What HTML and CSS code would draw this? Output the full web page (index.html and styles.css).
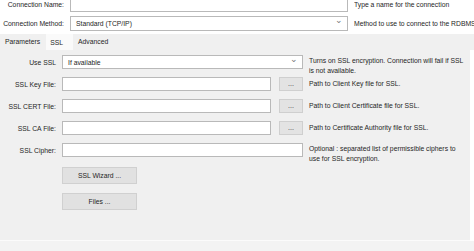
FILE: index.html
```html
<!DOCTYPE html>
<html>
<head>
    <title>Connection SSL</title>
    <link rel="stylesheet" href="styles.css">
</head>
<body>
    <div class="conn-header">
        <div class="conn-row row-name">
            <label>Connection Name:</label>
            <div class="text-input"></div>
            <span class="hint">Type a name for the connection</span>
        </div>
        <div class="conn-row">
            <label>Connection Method:</label>
            <div class="text-input select">Standard (TCP/IP)<span class="chev">&#8964;</span></div>
            <span class="hint">Method to use to connect to the RDBMS</span>
        </div>
    </div>
    <div class="tab-strip">
        <span class="tab">Parameters</span>
        <span class="tab active">SSL</span>
        <span class="tab">Advanced</span>
    </div>
    <div class="tab-panel">
        <div class="form-grid">
            <label>Use SSL</label>
            <div class="field"><div class="text-input select">If available<span class="chev">&#8964;</span></div></div>
            <span class="hint two-line">Turns on SSL encryption. Connection will fail if SSL<br>is not available.</span>

            <label>SSL Key File:</label>
            <div class="field"><div class="text-input"></div><button class="dots">...</button></div>
            <span class="hint">Path to Client Key file for SSL.</span>

            <label>SSL CERT File:</label>
            <div class="field"><div class="text-input"></div><button class="dots">...</button></div>
            <span class="hint">Path to Client Certificate file for SSL.</span>

            <label>SSL CA File:</label>
            <div class="field"><div class="text-input"></div><button class="dots">...</button></div>
            <span class="hint">Path to Certificate Authority file for SSL.</span>

            <label>SSL Cipher:</label>
            <div class="field"><div class="text-input"></div></div>
            <span class="hint two-line">Optional : separated list of permissible ciphers to<br>use for SSL encryption.</span>
        </div>
        <div class="actions">
            <button class="btn">SSL Wizard ...</button>
            <button class="btn">Files ...</button>
        </div>
    </div>
    <div class="footer-strip"></div>
</body>
</html>
```

FILE: styles.css
```css
body {
    margin: 0;
    width: 474px;
    height: 251px;
    overflow: hidden;
    background: #ffffff;
    font-family: "Liberation Sans", Arial, sans-serif;
    font-size: 6.8px;
    color: #262626;
}

.conn-header {
    display: flex;
    flex-direction: column;
    gap: 4px;
    margin-top: -3px;
    padding-bottom: 3px;
}

.conn-row {
    display: grid;
    grid-template-columns: 64px 278px 122px;
    column-gap: 6px;
    align-items: center;
    height: 15px;
}

.conn-row label {
    text-align: right;
    white-space: nowrap;
}

.conn-row .hint {
    white-space: nowrap;
    overflow: hidden;
}

.text-input {
    box-sizing: border-box;
    height: 15px;
    background: #fff;
    border: 1px solid #b9b9b9;
    padding: 0 5px;
    line-height: 13px;
    white-space: nowrap;
    position: relative;
}

.select .chev {
    position: absolute;
    right: 4px;
    top: -3px;
    color: #777;
    font-size: 9px;
}

.hint {
    color: #262626;
    line-height: 10px;
}

.tab-strip {
    display: flex;
    align-items: flex-end;
    height: 16px;
    background: #f0f0f0;
    padding-left: 2px;
}

.tab {
    padding: 0 6px 3px 3px;
    line-height: 11px;
}

.tab.active {
    background: #fafafa;
    height: 16px;
    box-sizing: border-box;
    padding: 3px 10px 0 4px;
    margin-right: 2px;
}

.tab-panel {
    background: #f0f0f0;
    height: 191px;
    box-sizing: border-box;
    border-bottom: 1px solid #fbfbfb;
    padding-top: 5px;
    margin-right: 4px;
}

.form-grid {
    display: grid;
    grid-template-columns: 56px 241px 160px;
    column-gap: 6px;
    row-gap: 8px;
    grid-auto-rows: 14px;
    align-items: center;
}

.form-grid label {
    text-align: right;
    white-space: nowrap;
    padding-top: 1px;
}

.form-grid .hint.two-line {
    align-self: start;
    margin-top: 1px;
    white-space: nowrap;
}

.field {
    display: flex;
    gap: 8px;
}

.field .text-input {
    flex: 1;
    height: 14px;
}

.dots {
    width: 24px;
    height: 14px;
    padding: 0;
    border: 1px solid #cfcfcf;
    background: #e3e3e3;
    font-family: inherit;
    font-size: 7px;
    color: #333;
    line-height: 8px;
}

.actions {
    display: flex;
    flex-direction: column;
    gap: 9px;
    margin: 10px 0 0 62px;
}

.btn {
    width: 75px;
    height: 17px;
    padding: 0;
    border: 1px solid #d0d0d0;
    background: #e1e1e1;
    font-family: inherit;
    font-size: 6.8px;
    color: #262626;
}

.footer-strip {
    height: 20px;
    background: #f3f3f3;
}
```
